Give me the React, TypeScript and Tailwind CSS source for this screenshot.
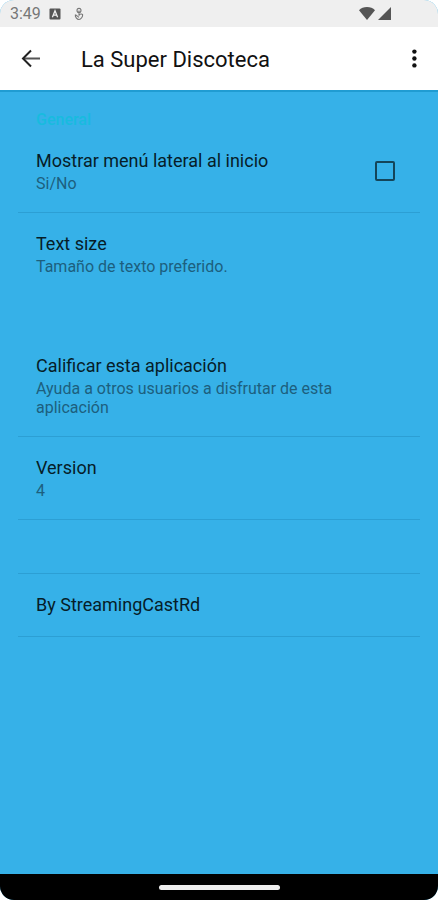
import { useState } from 'react'

// ─── Types ────────────────────────────────────────────────────────────────────

type PreferenceProps = {
  title: string
  summary?: string
  divider?: boolean
  children?: React.ReactNode
}

// ─── Icons ────────────────────────────────────────────────────────────────────

const KeyboardIcon = () => (
  <svg viewBox="0 0 12 12" className="h-3 w-3" aria-hidden="true">
    <rect x="0.5" y="0.5" width="11" height="11" rx="1" fill="#555" />
    <path d="M3.4 9.2 6 2.8l2.6 6.4M4.4 7.2h3.2" fill="none" stroke="#f0f0f0" strokeWidth="1.3" />
  </svg>
)

const TouchIcon = () => (
  <svg viewBox="0 0 12 14" className="h-3.5 w-3" fill="none" stroke="#777" aria-hidden="true">
    <circle cx="6" cy="3.4" r="2" strokeWidth="1.1" />
    <path d="M6 3.4v5.4M2.4 7.6c-.6 2 1.6 4.9 3.6 4.9s4-2.9 3.6-4.9C8.8 6.6 7 6.8 6 8.4M2.4 7.6 6 10.4" strokeWidth="1.1" />
  </svg>
)

const WifiIcon = () => (
  <svg viewBox="0 0 16 13" className="h-[13px] w-4" fill="#555" aria-hidden="true">
    <path d="M8 13 0 3.2C2 1.2 4.8 0 8 0s6 1.2 8 3.2z" />
  </svg>
)

const SignalIcon = () => (
  <svg viewBox="0 0 13 13" className="h-[13px] w-[13px]" fill="#555" aria-hidden="true">
    <path d="M13 0v13H0z" />
  </svg>
)

const BackIcon = () => (
  <svg viewBox="0 0 20 20" className="h-5 w-5" fill="none" aria-hidden="true">
    <path d="M19 9.5H3" stroke="#555" strokeWidth="2" />
    <path d="M10 1.5 2 9.5l8 8" stroke="#222" strokeWidth="2" />
  </svg>
)

const MoreIcon = () => (
  <svg viewBox="0 0 6 20" className="h-5 w-1.5" fill="#111" aria-hidden="true">
    <circle cx="3.4" cy="2.6" r="2.2" />
    <circle cx="3.4" cy="9.5" r="2.2" />
    <circle cx="3.4" cy="16.4" r="2.2" />
  </svg>
)

// ─── Preference row ───────────────────────────────────────────────────────────

const Preference = ({ title, summary, divider = true, children }: PreferenceProps) => (
  <div
    className={`mx-[18px] flex items-center justify-between px-[18px] py-[19px] ${
      divider ? 'border-b border-[#2c9fd4]' : ''
    }`}
  >
    <div className="max-w-[320px]">
      <p className="text-lg leading-6 text-[#061d28]">{title}</p>
      {summary && <p className="mt-px text-base leading-[19px] text-[#1d5f7e]">{summary}</p>}
    </div>
    {children}
  </div>
)

// ─── Main Component ───────────────────────────────────────────────────────────

const App = () => {
  const [showMenu, setShowMenu] = useState(false)

  return (
    <div className="flex min-h-screen flex-col overflow-hidden rounded-[14px] bg-[#36b1e8] font-['Roboto',sans-serif]">
      {/* ── Status bar ── */}
      <div className="flex h-[27px] items-center justify-between bg-[#efefef] pr-[47px] pl-2.5">
        <div className="flex items-center pt-px">
          <span className="text-base text-[#777]">3:49</span>
          <span className="ml-2 flex items-center gap-3">
            <KeyboardIcon />
            <TouchIcon />
          </span>
        </div>
        <div className="flex items-center gap-[3px]">
          <WifiIcon />
          <SignalIcon />
        </div>
      </div>

      {/* ── App bar ── */}
      <header className="flex h-[63px] items-center bg-white px-[21px]">
        <button type="button" aria-label="Back">
          <BackIcon />
        </button>
        <h1 className="ml-10 grow pt-0.5 text-[22px] leading-8 text-[#111]">La Super Discoteca</h1>
        <button type="button" aria-label="More options">
          <MoreIcon />
        </button>
      </header>

      {/* ── Settings ── */}
      <main className="grow border-t-2 border-[#209cd2]">
        <h2 className="px-9 pt-[18px] text-base leading-5 font-medium text-[#18bbdf]">General</h2>

        <Preference title="Mostrar menú lateral al inicio" summary="Si/No">
          <input
            type="checkbox"
            aria-label="Mostrar menú lateral al inicio"
            checked={showMenu}
            onChange={(e) => setShowMenu(e.target.checked)}
            className="mr-[7px] h-5 w-5 appearance-none rounded-xs border-2 border-[#144559] checked:bg-[#144559]"
          />
        </Preference>
        <Preference title="Text size" summary="Tamaño de texto preferido." divider={false} />

        <div className="h-10" />

        <Preference title="Calificar esta aplicación" summary="Ayuda a otros usuarios a disfrutar de esta aplicación" />
        <Preference title="Version" summary="4" />
        <div className="mx-[18px] h-[54px] border-b border-[#2c9fd4]" />
        <Preference title="By StreamingCastRd" />
      </main>

      {/* ── Gesture bar ── */}
      <div className="flex h-[26px] items-center justify-center bg-black">
        <div className="h-[5px] w-[121px] rounded-full bg-[#eee]" />
      </div>
    </div>
  )
}

export default App
